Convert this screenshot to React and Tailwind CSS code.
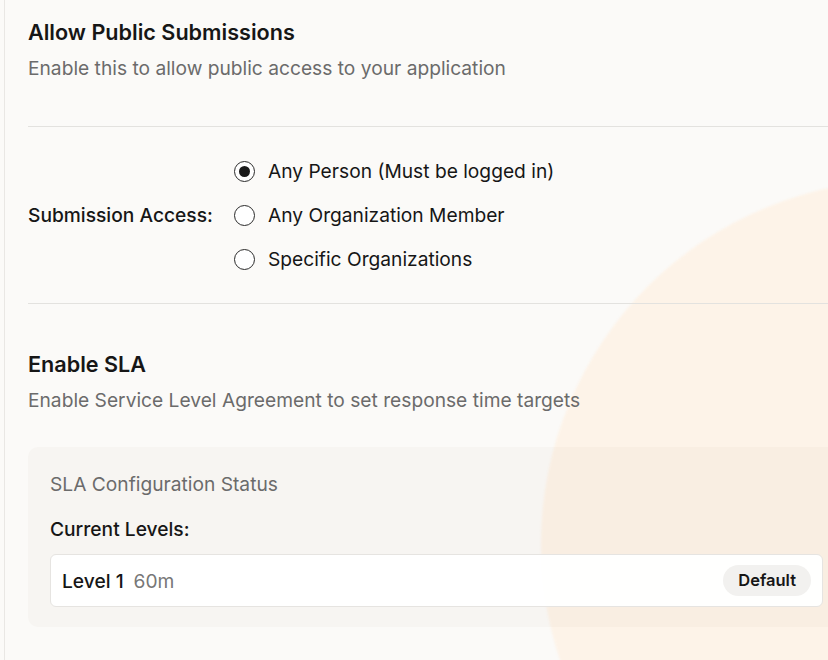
import React from 'react';

const options = [
  { label: 'Any Person (Must be logged in)', checked: true },
  { label: 'Any Organization Member', checked: false },
  { label: 'Specific Organizations', checked: false },
];

const Radio = ({ checked }) => (
  <span className="flex h-[21px] w-[21px] shrink-0 items-center justify-center rounded-full border-[1.5px] border-[#2a2a2a] bg-white">
    {checked && <span className="h-[11px] w-[11px] rounded-full bg-[#1a1a1a]" />}
  </span>
);

const App = () => {
  return (
    <div
      className="relative h-[660px] w-full overflow-hidden bg-[#fbfaf8] text-[#161616]"
      style={{ fontFamily: 'Inter, "Noto Sans", sans-serif' }}
    >
      {/* decorative blob */}
      <div className="pointer-events-none absolute left-[541px] top-[180px] h-[728px] w-[728px] rounded-full bg-[#fdf3e8] blur-[1px]" />

      <div className="relative ml-[4px] h-full border-l border-[#e9e7e4] pl-[23px]">
        <div className="w-[817px]">
          {/* Public submissions */}
          <div className="pt-[18px]">
            <h2 className="text-[21.6px] font-semibold leading-[28px]">Allow Public Submissions</h2>
            <p className="mt-[8px] text-[19.2px] leading-[28px] text-[#6b6b6b]">
              Enable this to allow public access to your application
            </p>
          </div>
          <div className="mt-[44px] border-t border-[#e3e2df]" />

          <div className="flex items-center py-[22px]">
            <span className="w-[206px] text-[19.2px] font-medium leading-[28px]">Submission Access:</span>
            <div className="flex flex-col">
              {options.map((o) => (
                <label key={o.label} className="flex h-[44px] items-center gap-[13px]">
                  <Radio checked={o.checked} />
                  <span className="text-[19.2px] leading-[28px] text-[#161616]">{o.label}</span>
                </label>
              ))}
            </div>
          </div>
          <div className="border-t border-[#e3e2df]" />

          {/* SLA */}
          <div className="pt-[46px]">
            <h2 className="text-[21.6px] font-semibold leading-[28px]">Enable SLA</h2>
            <p className="mt-[8px] text-[19.2px] leading-[28px] text-[#6b6b6b]">
              Enable Service Level Agreement to set response time targets
            </p>
          </div>

          <div className="mt-[33px] rounded-[10px] bg-[#8a6a4a]/[0.03] px-[22px] pb-[20px] pt-[23px]">
            <p className="text-[19.2px] leading-[28px] text-[#6b6b6b]">SLA Configuration Status</p>
            <p className="mt-[17px] text-[19.2px] font-medium leading-[28px]">Current Levels:</p>
            <div className="mt-[11px] flex h-[53px] items-center justify-between rounded-[6px] border border-[#e6e4e1] bg-white/95 px-[11px]">
              <div className="flex items-center gap-[10px] text-[19.2px] leading-[28px]">
                <span className="font-medium">Level 1</span>
                <span className="text-[#777777]">60m</span>
              </div>
              <span className="flex h-[31px] items-center rounded-full bg-[#f2f1ef] px-[15px] text-[16.5px] font-semibold">
                Default
              </span>
            </div>
          </div>
        </div>
      </div>
    </div>
  );
};

export default App;
